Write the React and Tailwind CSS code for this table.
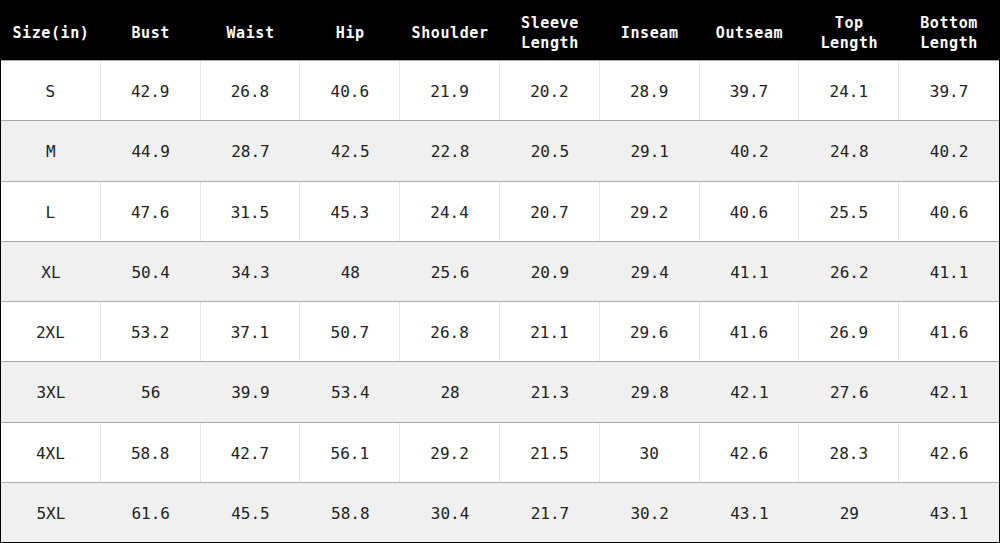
const headers = [
  ["Size(in)"],
  ["Bust"],
  ["Waist"],
  ["Hip"],
  ["Shoulder"],
  ["Sleeve", "Length"],
  ["Inseam"],
  ["Outseam"],
  ["Top", "Length"],
  ["Bottom", "Length"],
];

const rows = [
  ["S", "42.9", "26.8", "40.6", "21.9", "20.2", "28.9", "39.7", "24.1", "39.7"],
  ["M", "44.9", "28.7", "42.5", "22.8", "20.5", "29.1", "40.2", "24.8", "40.2"],
  ["L", "47.6", "31.5", "45.3", "24.4", "20.7", "29.2", "40.6", "25.5", "40.6"],
  ["XL", "50.4", "34.3", "48", "25.6", "20.9", "29.4", "41.1", "26.2", "41.1"],
  ["2XL", "53.2", "37.1", "50.7", "26.8", "21.1", "29.6", "41.6", "26.9", "41.6"],
  ["3XL", "56", "39.9", "53.4", "28", "21.3", "29.8", "42.1", "27.6", "42.1"],
  ["4XL", "58.8", "42.7", "56.1", "29.2", "21.5", "30", "42.6", "28.3", "42.6"],
  ["5XL", "61.6", "45.5", "58.8", "30.4", "21.7", "30.2", "43.1", "29", "43.1"],
];

export default function App() {
  return (
    <div className="w-[1000px] h-[543px] flex flex-col bg-white border-x border-b border-black font-['DejaVu_Sans_Mono',monospace]">
      <div className="h-[60px] shrink-0 grid grid-cols-10 bg-black text-white font-bold text-[15px] leading-[20px] tracking-[0.6px]">
        {headers.map((h, i) => (
          <div key={i} className="flex flex-col items-center justify-center text-center pt-[5px]">
            {h.map((line) => (
              <span key={line}>{line}</span>
            ))}
          </div>
        ))}
      </div>
      {rows.map((row, r) => {
        const gray = r % 2 === 1;
        return (
          <div
            key={row[0]}
            className={
              "flex-1 grid grid-cols-10 border-t border-[#a9a9a9] text-[16px] text-[#222]" +
              (gray ? " bg-[#f0f0f0]" : " bg-white")
            }
          >
            {row.map((v, c) => (
              <div
                key={c}
                className={
                  "flex items-center justify-center pt-[3px]" +
                  (!gray && c < 9 ? " border-r border-[#e6e6e6]" : "")
                }
              >
                {v}
              </div>
            ))}
          </div>
        );
      })}
    </div>
  );
}
